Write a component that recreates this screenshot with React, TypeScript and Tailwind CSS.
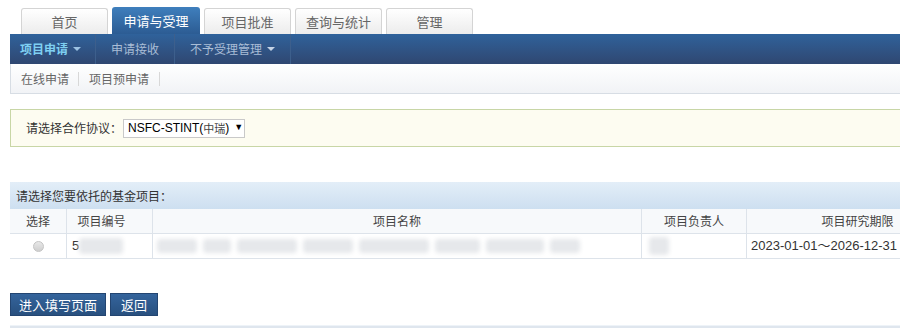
import React from "react";

const tabs = ["首页", "申请与受理", "项目批准", "查询与统计", "管理"];

const cjk = { fontFamily: '"Noto Sans CJK SC", "Noto Sans", sans-serif' };
const latin = { fontFamily: '"Liberation Sans", Arial, "Noto Sans CJK SC", sans-serif' };

const Caret = ({ color }: { color: string }) => (
    <span
        className="ml-[5px] inline-block h-0 w-0 border-x-[4px] border-t-[4px] border-x-transparent align-middle"
        style={{ borderTopColor: color }}
    />
);

const Blur = ({ w, h = 14, className = "" }: { w: number; h?: number; className?: string }) => (
    <span className={`inline-block rounded-sm bg-[#e6e8eb] blur-[2px] ${className}`} style={{ width: w, height: h }} />
);

export default function App() {
    return (
        <div className="h-[329px] w-[900px] overflow-hidden bg-white text-[13px] text-[#333]" style={cjk}>
            <div className="w-[980px] pl-[10px]">
                {/* top tabs */}
                <div className="flex h-[34px] items-end gap-[4px] pl-[11px]">
                    {tabs.map((t, i) =>
                        i === 1 ? (
                            <div
                                key={t}
                                className="flex h-[27px] w-[88px] items-center justify-center rounded-t-[3px] bg-gradient-to-b from-[#3f7fbd] to-[#2c5c93] text-[13px] text-white"
                            >
                                {t}
                            </div>
                        ) : (
                            <div
                                key={t}
                                className="flex h-[26px] w-[87px] items-center justify-center rounded-t-[3px] border border-b-0 border-[#d4d4d4] bg-gradient-to-b from-[#ffffff] to-[#ececec] text-[13px] text-[#666]"
                            >
                                {t}
                            </div>
                        )
                    )}
                </div>

                {/* main nav */}
                <div className="flex h-[30px] items-center bg-gradient-to-b from-[#2f629b] to-[#2f4771] text-[12px]">
                    <div className="flex h-full items-center border-r border-[#3d5f8c] pl-[10px] pr-[14px] font-bold text-[#7fd0f2]">
                        项目申请
                        <Caret color="#9cc3e4" />
                    </div>
                    <div className="flex h-full items-center border-r border-[#3d5f8c] px-[15px] text-[#a9bdd6]">申请接收</div>
                    <div className="flex h-full items-center border-r border-[#3d5f8c] px-[15px] text-[#a9bdd6]">
                        不予受理管理
                        <Caret color="#c4d3e6" />
                    </div>
                </div>

                {/* sub nav */}
                <div className="flex h-[30px] items-center border-b border-l border-[#d7dde4] bg-gradient-to-b from-[#ffffff] to-[#f1f3f6] text-[12px] text-[#666]">
                    <span className="border-r border-[#d8d8d8] pl-[10px] pr-[9px] leading-[14px]">在线申请</span>
                    <span className="border-r border-[#d8d8d8] px-[10px] leading-[14px]">项目预申请</span>
                </div>

                {/* protocol box */}
                <div className="mt-[15px] flex h-[38px] items-center border border-[#c8d6a6] bg-[#fdfcf1] pl-[15px]">
                    <span className="text-[12px] text-[#333]">请选择合作协议：</span>
                    <div
                        className="ml-[1px] flex h-[19px] w-[122px] items-center border border-[#c9c9c9] bg-white pl-[4px] text-[12px] text-black"
                        style={latin}
                    >
                        NSFC-STINT(<span style={cjk} className="text-[11px] text-[#444]">中瑞</span>)
                        <span className="ml-[5px] text-[9px]">▼</span>
                    </div>
                </div>

                {/* project table */}
                <div className="mt-[35px]">
                    <div className="flex h-[27px] items-center bg-gradient-to-b from-[#e3eef8] to-[#cddff0] pl-[6px] text-[12px] text-[#333]">
                        请选择您要依托的基金项目：
                    </div>
                    <div className="grid grid-cols-[57px_86px_489px_105px_221px] text-[12px]">
                        <div className="flex h-[25px] items-center justify-center border-b border-r border-[#dde3ea] bg-[#f7f9fb] text-[#444]">选择</div>
                        <div className="flex h-[25px] items-center justify-center border-b border-r border-[#dde3ea] bg-[#f7f9fb] pr-[16px] text-[#444]">项目编号</div>
                        <div className="flex h-[25px] items-center justify-center border-b border-r border-[#dde3ea] bg-[#f7f9fb] text-[#444]">项目名称</div>
                        <div className="flex h-[25px] items-center justify-center border-b border-r border-[#dde3ea] bg-[#f7f9fb] text-[#444]">项目负责人</div>
                        <div className="flex h-[25px] items-center justify-center border-b border-[#dde3ea] bg-[#f7f9fb] text-[#444]">项目研究期限</div>

                        <div className="flex h-[25px] items-center justify-center border-b border-r border-[#dde3ea]">
                            <span className="h-[11px] w-[11px] rounded-full border border-[#c4c4c4] bg-gradient-to-b from-[#e8e8e8] to-[#cfcfcf]" />
                        </div>
                        <div className="flex h-[25px] items-center border-b border-r border-[#dde3ea] pl-[5px]">
                            <span className="text-[13px] text-[#333]" style={latin}>5</span>
                            <Blur w={44} h={16} className="bg-[#dcdfe3]" />
                        </div>
                        <div className="flex h-[25px] items-center gap-[6px] border-b border-r border-[#dde3ea] pl-[4px]">
                            <Blur w={40} />
                            <Blur w={28} />
                            <Blur w={60} />
                            <Blur w={50} />
                            <Blur w={70} />
                            <Blur w={45} />
                            <Blur w={58} />
                            <Blur w={30} />
                        </div>
                        <div className="flex h-[25px] items-center border-b border-r border-[#dde3ea] pl-[7px]">
                            <Blur w={20} h={18} />
                        </div>
                        <div className="flex h-[25px] items-center border-b border-[#dde3ea] pl-[4px] text-[13px] text-[#333]" style={latin}>
                            2023-01-01～2026-12-31
                        </div>
                    </div>
                </div>

                {/* buttons */}
                <div className="mt-[34px] flex gap-[4px]">
                    <button className="h-[23px] w-[96px] border border-[#234571] bg-gradient-to-b from-[#34649c] to-[#28507f] text-[13px] text-white">
                        进入填写页面
                    </button>
                    <button className="h-[23px] w-[48px] border border-[#234571] bg-gradient-to-b from-[#34649c] to-[#28507f] text-[13px] text-white">
                        返回
                    </button>
                </div>

                <div className="mt-[9px] h-[3px] border-t border-[#eef3f8] bg-[#dfe6ee]" />
            </div>
        </div>
    );
}
